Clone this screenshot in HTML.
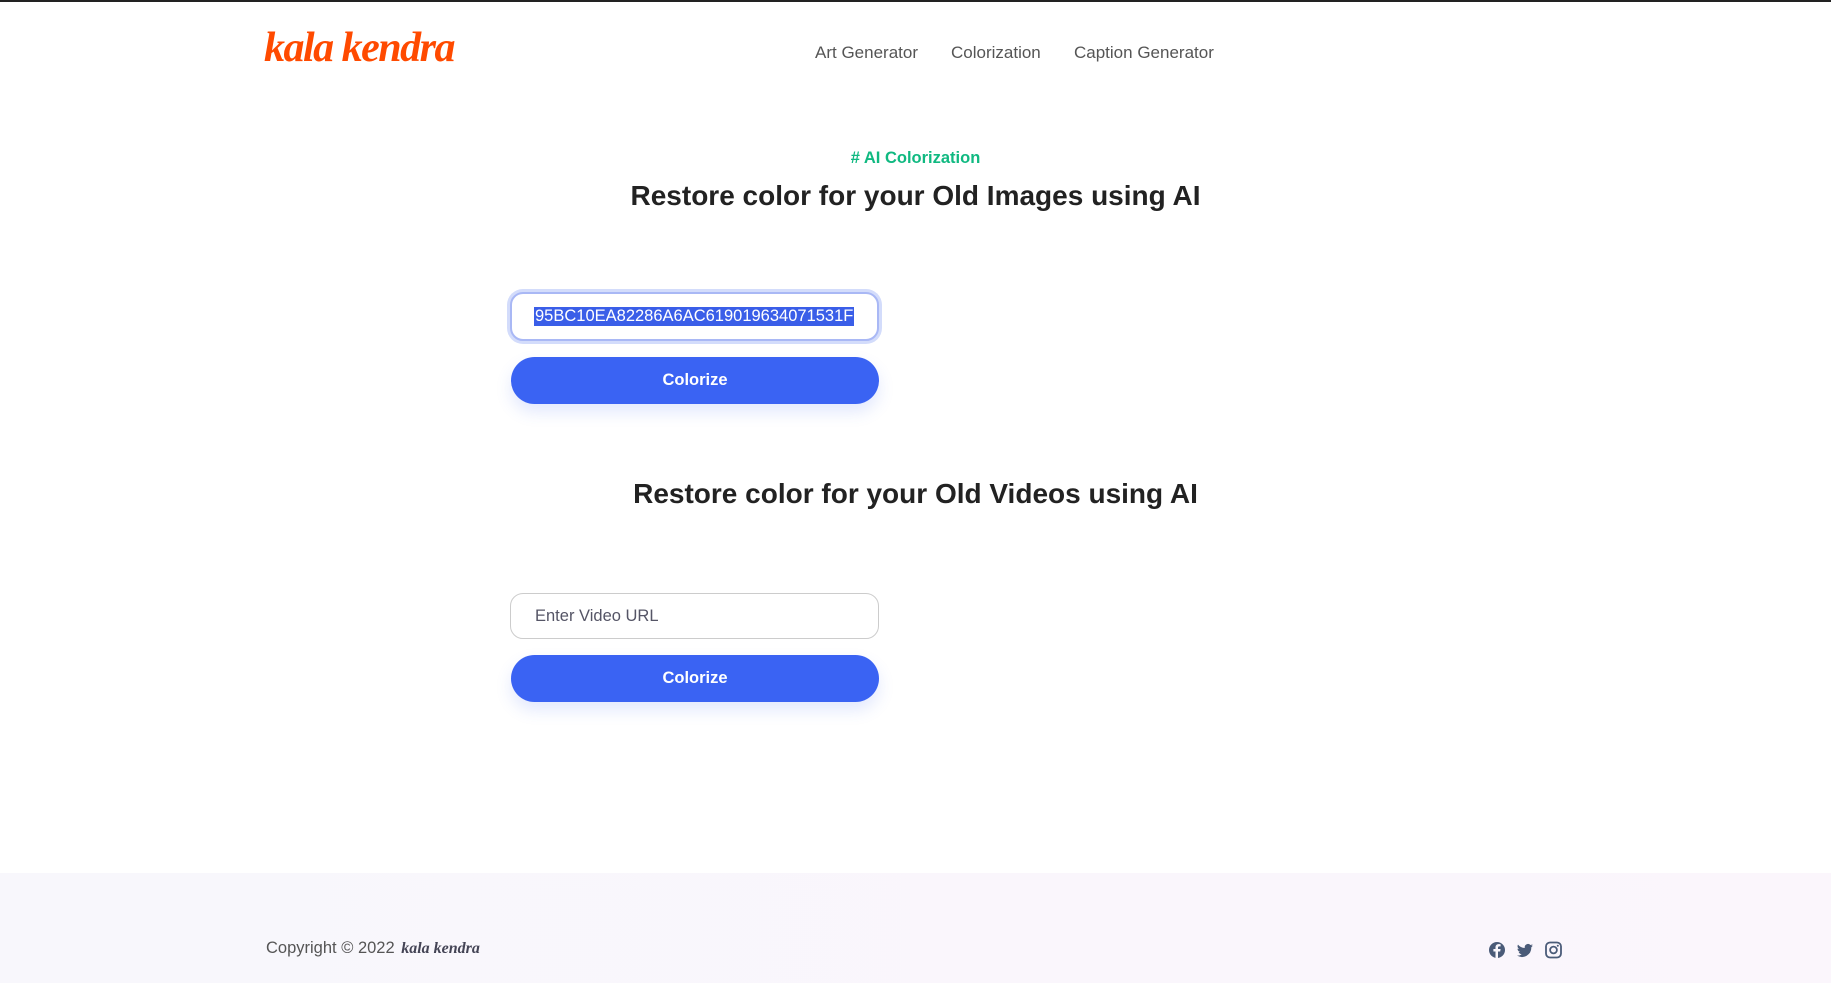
<!DOCTYPE html>
<html><head><meta charset="utf-8">
<style>
*{box-sizing:border-box;margin:0;padding:0}
body{width:1831px;height:981px;overflow:hidden;background:#fff;font-family:"Liberation Sans",sans-serif;position:relative;border-top:2px solid #222}
.abs{position:absolute}
.logo{left:264px;top:22px;font-family:"Liberation Serif",serif;font-weight:bold;font-size:42px;color:#ff4a00;letter-spacing:-1.5px;font-style:italic}
.nav{top:41px;font-size:17px;color:#555}
.tag{left:0;width:1831px;text-align:center;top:147px;color:#10b981;font-weight:bold;font-size:16.5px}
h2{position:absolute;left:0;width:1831px;text-align:center;font-size:28px;color:#222;font-weight:bold}
.inp{left:510px;width:369px;border:1px solid #ccc;border-radius:13px;background:#fff;font-size:16.5px;color:#556;padding-left:24px;display:flex;align-items:center}
.btn{left:511px;width:368px;height:47px;border-radius:24px;background:#3a63f3;color:#fff;font-weight:bold;font-size:16.5px;text-align:center;line-height:47px;box-shadow:0 8px 16px rgba(58,99,243,0.15)}
.foot{left:0;top:871px;width:1831px;height:110px;background:linear-gradient(90deg,#f8f7fc,#fbf6fc)}
</style></head><body>
<div class="abs logo">kala kendra</div>
<div class="abs nav" style="left:815px">Art Generator</div>
<div class="abs nav" style="left:951px">Colorization</div>
<div class="abs nav" style="left:1074px">Caption Generator</div>
<div class="abs tag"># AI Colorization</div>
<h2 style="top:178px">Restore color for your Old Images using AI</h2>
<div class="abs inp" style="top:290px;height:49px;border:2px solid #a9b8f5;box-shadow:0 0 0 3px #d3dcfb">
<span style="background:#3a5ee8;color:#fff;padding:0 1px;margin-left:-2px">95BC10EA82286A6AC619019634071531F</span></div>
<div class="abs btn" style="top:355px">Colorize</div>
<h2 style="top:476px">Restore color for your Old Videos using AI</h2>
<div class="abs inp" style="top:591px;height:46px">Enter Video URL</div>
<div class="abs btn" style="top:653px">Colorize</div>
<div class="abs foot"></div>
<div class="abs" style="left:266px;top:937px;font-size:16.5px;color:#555">Copyright © 2022 <span style="font-family:'Liberation Serif',serif;font-style:italic;font-weight:bold;color:#445;font-size:16px;margin-left:2px">kala kendra</span></div>
<svg class="abs" style="left:1489px;top:939px" width="80" height="18" viewBox="0 0 80 18" fill="#4a5b78">
<circle cx="8" cy="9" r="8"/><path d="M9 17V10.5h2.2l.4-2.5H9V6.6c0-.7.3-1.2 1.3-1.2h1.3V3.2c-.3 0-1-.1-1.9-.1-2 0-3.2 1.2-3.2 3.3V8H4.4v2.5h2.1V17z" fill="#f9f7fc"/>
<path d="M44 4.5c-.6.3-1.2.4-1.9.5.7-.4 1.2-1 1.4-1.8-.6.4-1.3.6-2.1.8a3.3 3.3 0 0 0-5.6 3A9.3 9.3 0 0 1 29 3.6a3.3 3.3 0 0 0 1 4.4c-.5 0-1-.2-1.5-.4 0 1.600 1.1 2.9 2.6 3.2-.5.1-1 .2-1.5.1.4 1.3 1.6 2.3 3.1 2.3A6.6 6.6 0 0 1 28 14.5a9.3 9.3 0 0 0 14.3-8.3c.7-.5 1.2-1 1.7-1.7z"/>
<rect x="57" y="1.5" width="15" height="15" rx="4" fill="none" stroke="#4a5b78" stroke-width="1.8"/><circle cx="64.5" cy="9" r="3.4" fill="none" stroke="#4a5b78" stroke-width="1.8"/><circle cx="68.8" cy="4.8" r="1"/>
</svg>
</body></html>
